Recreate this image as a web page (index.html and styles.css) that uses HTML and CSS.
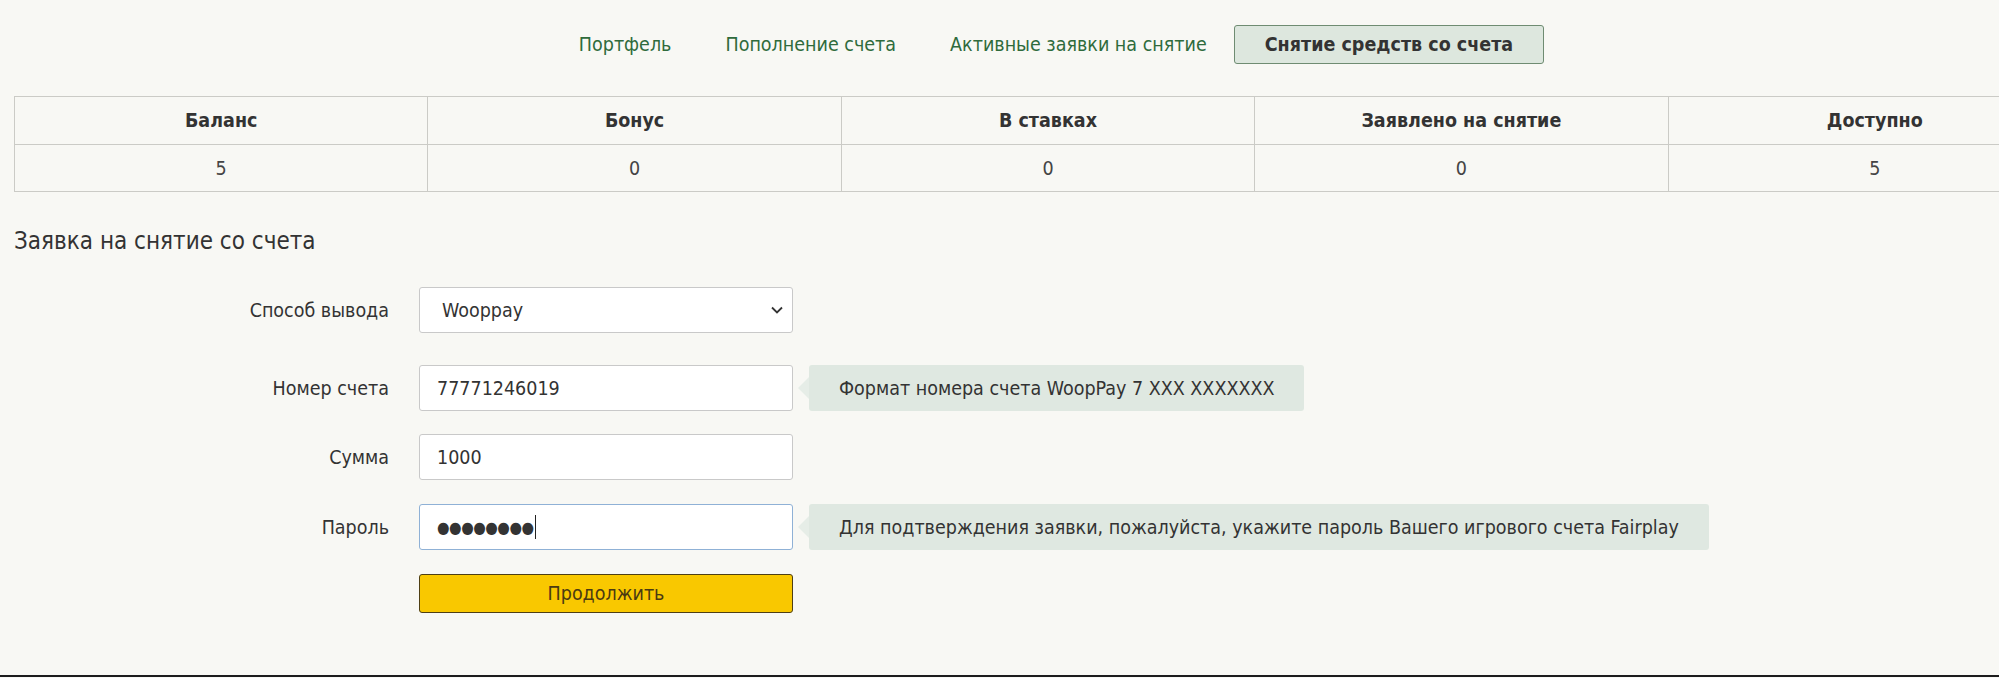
FILE: index.html
```html
<!DOCTYPE html>
<html lang="ru">
<head>
    <meta charset="UTF-8">
    <meta name="viewport" content="width=device-width, initial-scale=1.0">
    <title>Снятие средств со счета</title>
    <link rel="stylesheet" href="styles.css">
</head>
<body>
    <div class="page">
        <nav class="tabs">
            <a class="tab" href="#">Портфель</a>
            <a class="tab" href="#">Пополнение счета</a>
            <a class="tab" href="#">Активные заявки на снятие</a>
            <a class="tab active" href="#">Снятие средств со счета</a>
        </nav>

        <table class="summary">
            <thead>
                <tr>
                    <th>Баланс</th>
                    <th>Бонус</th>
                    <th>В ставках</th>
                    <th>Заявлено на снятие</th>
                    <th>Доступно</th>
                </tr>
            </thead>
            <tbody>
                <tr>
                    <td>5</td>
                    <td>0</td>
                    <td>0</td>
                    <td>0</td>
                    <td>5</td>
                </tr>
            </tbody>
        </table>

        <h2 class="title">Заявка на снятие со счета</h2>

        <form class="withdraw">
            <div class="row row-first">
                <label class="label">Способ вывода</label>
                <div class="select-wrap">
                    <select class="field">
                        <option>Wooppay</option>
                    </select>
                    <!-- chevron -->
                    <svg class="chevron" width="12" height="8" viewBox="0 0 12 8">
                        <path d="M1 1.5 L6 6.5 L11 1.5" fill="none" stroke="#333" stroke-width="1.8"/>
                    </svg>
                </div>
            </div>

            <div class="row row-tight">
                <label class="label">Номер счета</label>
                <input class="field" type="text" value="77771246019">
                <div class="hint">Формат номера счета WoopPay 7 XXX XXXXXXX</div>
            </div>

            <div class="row">
                <label class="label">Сумма</label>
                <input class="field" type="text" value="1000">
            </div>

            <div class="row">
                <label class="label">Пароль</label>
                <div class="pass focused">
                    <span class="dots">●●●●●●●●</span><span class="caret"></span>
                </div>
                <div class="hint">Для подтверждения заявки, пожалуйста, укажите пароль Вашего игрового счета Fairplay</div>
            </div>

            <div class="row row-last">
                <span class="label"></span>
                <button class="submit" type="button">Продолжить</button>
            </div>
        </form>
    </div>

    <div class="footer"></div>
</body>
</html>
```

FILE: styles.css
```css
body {
    margin: 0;
    background: #f8f8f4;
    color: #333;
    font-family: "DejaVu Sans Condensed", "DejaVu Sans", sans-serif;
    font-stretch: condensed;
    font-size: 19.5px;
    overflow: hidden;
}

.page {
    width: 2068px;
    margin-left: 14px;
    padding-top: 25px;
}

/* Tabs */
.tabs {
    display: flex;
    justify-content: center;
    align-items: center;
    height: 39px;
}

.tab {
    display: flex;
    align-items: center;
    height: 37px;
    padding: 0 27px;
    color: #2f6b3c;
    text-decoration: none;
}

.tab.active {
    padding: 0 30px;
    background: #dde7de;
    border: 1px solid #6f8c72;
    border-radius: 3px;
    color: #333;
    font-weight: bold;
}

/* Summary table */
.summary {
    width: 100%;
    margin-top: 32px;
    border-collapse: collapse;
    table-layout: fixed;
}

.summary th,
.summary td {
    border: 1px solid #cbcbc6;
    text-align: center;
    padding: 0;
}

.summary th {
    height: 47px;
    font-weight: bold;
    color: #333;
}

.summary td {
    height: 46px;
    color: #444;
}

.title {
    margin: 34px 0 0;
    height: 30px;
    line-height: 30px;
    font-size: 24px;
    font-weight: normal;
    color: #333;
}

/* Form */
.withdraw {
    margin-top: 31px;
}

.row {
    display: flex;
    align-items: center;
    margin-bottom: 24px;
}

.row-first {
    margin-bottom: 32px;
}

.row-tight {
    margin-bottom: 23px;
}

.row-last {
    margin-bottom: 0;
}

.label {
    width: 375px;
    margin-right: 30px;
    text-align: right;
    color: #333;
}

.field,
.pass {
    box-sizing: border-box;
    width: 374px;
    height: 46px;
    padding: 0 0 0 17px;
    border: 1px solid #c9c9c9;
    border-radius: 3px;
    background: #fff;
    color: #333;
    font-family: inherit;
    font-stretch: condensed;
    font-size: 19.5px;
    outline: none;
}

.pass {
    display: flex;
    align-items: center;
}

.pass.focused {
    border-color: #8fb1d6;
}

.dots {
    font-family: "DejaVu Sans", sans-serif;
    font-size: 16px;
    letter-spacing: -0.5px;
    color: #333;
}

.caret {
    width: 1px;
    height: 24px;
    margin-left: 1px;
    background: #222;
}

.select-wrap {
    position: relative;
}

select.field {
    appearance: none;
    -webkit-appearance: none;
    padding-left: 22px;
}

.chevron {
    position: absolute;
    right: 10px;
    top: 19px;
    pointer-events: none;
}

.hint {
    position: relative;
    display: flex;
    align-items: center;
    box-sizing: border-box;
    height: 46px;
    margin-left: 16px;
    padding: 0 30px;
    background: #dfe8e1;
    border-radius: 3px;
    color: #333;
}

.hint::before {
    content: "";
    position: absolute;
    left: -11px;
    top: 50%;
    margin-top: -11px;
    border-top: 11px solid transparent;
    border-bottom: 11px solid transparent;
    border-right: 11px solid #e6ede7;
}

.submit {
    box-sizing: border-box;
    width: 374px;
    height: 39px;
    background: #f9c800;
    border: 1px solid #4e3f14;
    border-radius: 3px;
    color: #4a3a12;
    font-family: inherit;
    font-stretch: condensed;
    font-size: 19.5px;
    cursor: pointer;
}

.footer {
    margin-top: 62px;
    height: 10px;
    border-top: 2px solid #1c1c1c;
}
```
